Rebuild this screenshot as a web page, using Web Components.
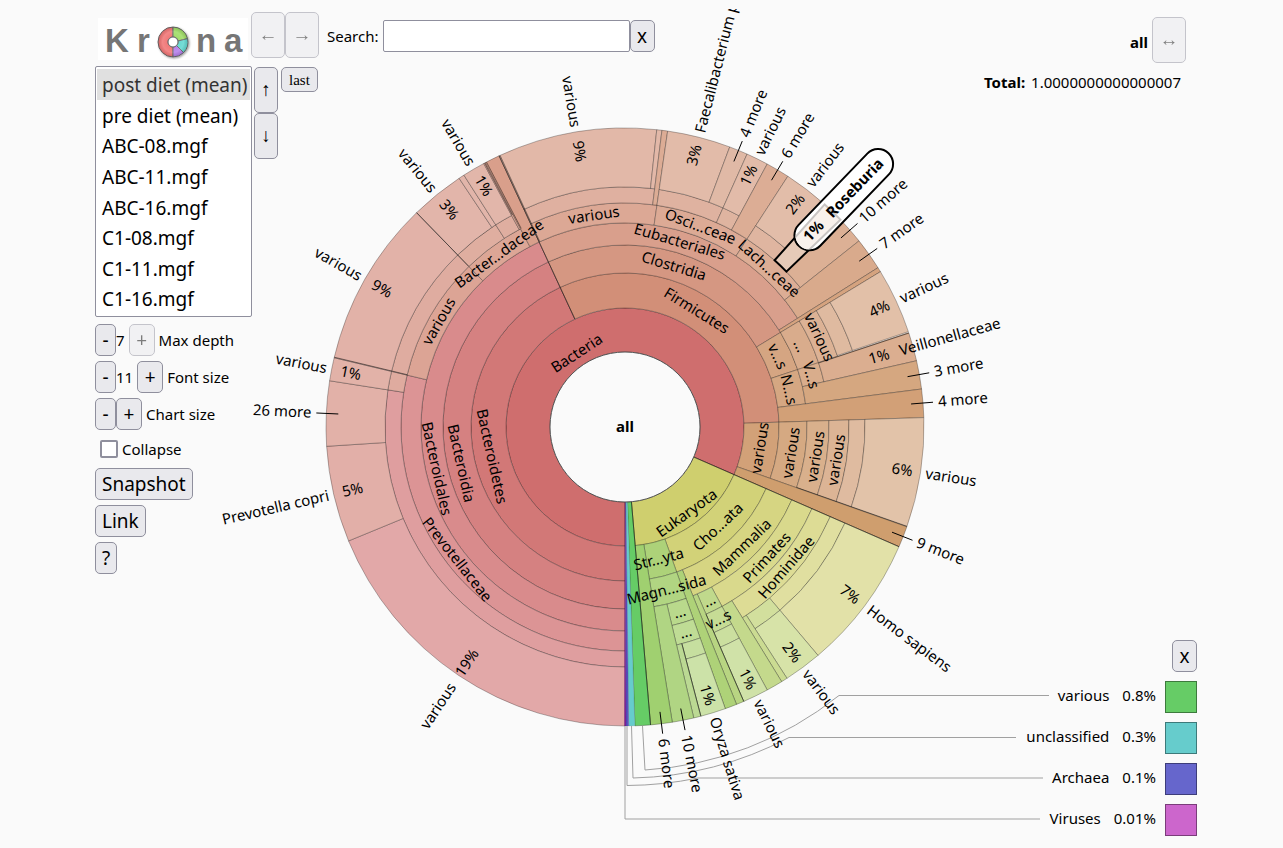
<!DOCTYPE html>
<html lang="en">
<head>
<meta charset="utf-8">
<title>Krona - all</title>
<style>
  body {
    margin: 0;
    background: #fafafa;
    color: #000;
    font: 15px/20px "Noto Sans", sans-serif;
  }
</style>
</head>
<body>
<krona-app></krona-app>

<script>
(function () {
  'use strict';

  // Shared look of the push buttons, included by every element that has one.
  var buttonStyle = `
    button {
      box-sizing: border-box;
      height: 32px;
      margin: 0;
      padding: 0 6px;
      border: 1px solid #8f8f9d;
      border-radius: 5px;
      background: #e9e9ed;
      color: #000;
      font: 19px/24px "Noto Sans", sans-serif;
    }
    button:disabled { opacity: 0.5; }
    button.arrow {
      width: 34px;
      height: 46px;
      padding: 0;
      font: 19px/24px "Liberation Serif", serif;
    }
  `;

  function define(name, template, setup) {
    customElements.define(name, class extends HTMLElement {
      constructor() {
        super();
        var $template = document.createElement('template');
        $template.innerHTML = template;
        this.attachShadow({ mode: 'open' }).appendChild($template.content.cloneNode(true));
      }
      connectedCallback() {
        if (setup && !this.ready) {
          this.ready = true;
          setup.call(this, this.shadowRoot);
        }
      }
    });
  }

  // compass angle (0 = up, clockwise) and radius to a point
  var CX = 625;
  var CY = 427;
  function point(angle, r) {
    var a = angle * Math.PI / 180;
    return (CX + r * Math.sin(a)).toFixed(2) + ' ' + (CY - r * Math.cos(a)).toFixed(2);
  }

  // ring n lies between RINGS[n] and RINGS[n + 1]
  var RINGS = [75, 119, 154, 182, 204, 224, 240, 299];

  // [start, end, first ring, last ring, color, label in the ring]
  var SLICES = [
    [180, 473.6, 0, 0, '#cf6e6e', 'Bacteria'],
    [180, 335.1, 1, 1, '#d27877', 'Bacteroidetes'],
    [180, 335.1, 2, 2, '#d58181', 'Bacteroidia'],
    [180, 335.1, 3, 3, '#d98b8c', 'Bacteroidales'],
    [180, 283.4, 4, 4, '#dc9495', 'Prevotellaceae'],
    [180, 278.9, 5, 5, '#df9e9f'],
    [180, 247.6, 6, 6, '#e2a8a8'],
    [247.6, 266.3, 6, 6, '#e2afa8'],
    [266.3, 278.9, 6, 6, '#e2b1a8'],
    [278.9, 283.4, 5, 5, '#dfab9f'],
    [278.9, 283.4, 6, 6, '#e2b2a8'],
    [283.4, 315.8, 4, 4, '#dca495', 'various'],
    [283.4, 315.8, 5, 5, '#dfaca0'],
    [283.4, 315.8, 6, 6, '#e2b2a8'],
    [315.8, 332.2, 4, 4, '#dca696', 'Bacter...daceae'],
    [315.8, 327.4, 5, 5, '#dfaea0'],
    [315.8, 326.3, 6, 6, '#e2b5aa'],
    [326.3, 327.4, 6, 6, '#e2b5aa'],
    [327.4, 331.8, 5, 5, '#dfaea0'],
    [327.4, 331.8, 6, 6, '#e2b6aa'],
    [331.8, 332.2, 5, 6, '#dca696'],
    [332.2, 335.1, 4, 6, '#d99f8b'],

    [335.1, 448.2, 1, 1, '#d28f78', 'Firmicutes'],
    [335.1, 418.7, 2, 2, '#d59782', 'Clostridia'],
    [335.1, 417.8, 3, 3, '#d99f8c', 'Eubacteriales'],
    [335.1, 368.2, 4, 4, '#dca895', 'various'],
    [335.1, 367.1, 5, 5, '#dfb0a0'],
    [335.1, 366.1, 6, 6, '#e2b8a8'],
    [366.1, 367.1, 6, 6, '#e2b8a8'],
    [367.1, 368.2, 5, 6, '#dcac95'],
    [368.2, 393, 4, 4, '#dcaa95', 'Osci...ceae'],
    [368.2, 384.1, 5, 5, '#dfb2a0'],
    [368.2, 380.5, 6, 6, '#e2bba9'],
    [380.5, 384.1, 6, 6, '#e0b9a6'],
    [384.1, 388.4, 5, 5, '#dfb4a0'],
    [384.1, 388.4, 6, 6, '#e2bba9'],
    [388.4, 393, 5, 6, '#dcad95'],
    [393, 411.5, 4, 4, '#dcad95', 'Lach...ceae'],
    [393, 401.9, 5, 5, '#dfb5a0'],
    [393, 401.9, 6, 6, '#e2bda9'],
    [406.1, 411.5, 5, 6, '#dcb095'],
    [411.5, 417.8, 4, 6, '#d9aa8c'],
    [417.8, 418.7, 3, 6, '#d5a37f'],
    [418.7, 431.6, 2, 2, '#d5a582', 'v...s'],
    [418.7, 431.6, 3, 3, '#d9ac8c', '...'],
    [418.7, 431.6, 4, 4, '#dcb295', 'various'],
    [418.7, 431.4, 5, 5, '#dfbaa0'],
    [418.7, 431.4, 6, 6, '#e2c0a8'],
    [431.6, 442.7, 2, 2, '#d5a782', 'N...s'],
    [431.6, 437.2, 3, 3, '#d9ad8c', 'V...s'],
    [431.6, 437.2, 4, 6, '#dbae90'],
    [437.2, 442.7, 3, 6, '#d5a780'],
    [442.7, 448.2, 2, 6, '#d2a077'],
    [448.2, 469.5, 1, 1, '#d2a178', 'various'],
    [448.2, 469.5, 2, 2, '#d5a982', 'various'],
    [448.2, 469.5, 3, 3, '#d9b08c', 'various'],
    [448.2, 469.5, 4, 4, '#dcb495', 'various'],
    [448.2, 469.5, 5, 5, '#dfbba0'],
    [448.2, 469.5, 6, 6, '#e2c3a9'],
    [469.5, 473.6, 1, 6, '#cf9e6e'],

    [113.6, 175.1, 0, 0, '#cfcf6e', 'Eukaryota'],
    [113.6, 160.4, 1, 1, '#d2d278', 'Cho...ata'],
    [113.6, 158.1, 2, 2, '#d6d582', 'Mammalia'],
    [113.6, 151.6, 3, 3, '#d9d98c', 'Primates'],
    [113.6, 148.4, 4, 4, '#dddc95', 'Hominidae'],
    [113.6, 139.8, 5, 5, '#e0dfa0'],
    [113.6, 139.8, 6, 6, '#e2e1a8'],
    [139.8, 147.2, 5, 5, '#d2df9d'],
    [139.8, 147.2, 6, 6, '#d7e3a8'],
    [147.2, 148.4, 5, 6, '#cbdb92'],
    [148.4, 151.6, 4, 6, '#c4d98c'],
    [151.6, 156.6, 3, 3, '#c0d98c', '...'],
    [151.6, 156.6, 4, 4, '#c6dc95', 'v...s'],
    [151.6, 156.6, 5, 5, '#cbdf9f'],
    [151.6, 156.6, 6, 6, '#d0e2a8'],
    [156.6, 158.1, 3, 6, '#b8d582'],
    [158.1, 160.4, 2, 6, '#aed278'],
    [160.4, 170.9, 1, 1, '#add279', 'Str...yta'],
    [160.4, 170.9, 2, 2, '#b1d582', 'Magn...sida'],
    [160.4, 166.7, 3, 3, '#b9d98c', '...'],
    [160.4, 166.7, 4, 4, '#bfdc95', '...'],
    [160.4, 165.3, 5, 5, '#c6df9f'],
    [160.4, 165.3, 6, 6, '#cce2a8'],
    [165.3, 166.7, 5, 6, '#bbd993'],
    [166.7, 170.9, 3, 6, '#b0d583'],
    [170.9, 175.1, 1, 6, '#a0d070'],

    [175.1, 178.1, 0, 6, '#66cc66'],
    [178.1, 179.3, 0, 6, '#66cccc'],
    [179.3, 179.8, 0, 6, '#5a50c0'],
    [179.8, 180.1, 0, 6, '#8020a0']
  ];

  // Bundles of slices too thin to fill: [angle, inner radius, outer radius]
  var EDGES = [
    [335.1, 119, 299], [335.3, 204, 299], [315.8, 224, 299],
    [283.5, 224, 299], [332, 240, 299], [332.4, 224, 299],
    [71.7, 204, 299], [109.4, 182, 299], [113.6, 75, 299],
    [156.6, 204, 299], [165.3, 224, 299],
    [175.1, 75, 299]
  ];

  // Labels outside the rim: [angle, name, percentage, radius of the name]
  var LABELS = [
    [350.6, 'various', '9%', 304],
    [14.3, 'Faecalibacterium prausnitzii', '3%', 304],
    [26.2, 'various', '1%', 304],
    [37.4, 'various', '2%', 304],
    [65.1, 'various', '4%', 304],
    [98.8, 'various', '6%', 304],
    [126.7, 'Homo sapiens', '7%', 304],
    [143.5, 'various', '2%', 304],
    [154.1, 'various', '1%', 304],
    [162.9, 'Oryza sativa', '1%', 304],
    [213.8, 'various', '19%', 310],
    [257, 'Prevotella copri', '5%', 304],
    [281.1, 'various', '1%', 304],
    [299.6, 'various', '9%', 304],
    [321, 'various', '3%', 304],
    [329.6, 'various', '1%', 304]
  ];

  // Groups of hidden slices: [angle, text]
  var MORE = [
    [22.3, '4 more'], [30.7, '6 more'], [48.8, '10 more'], [54.7, '7 more'],
    [79.9, '3 more'], [85.4, '4 more'], [111.5, '9 more'], [168.8, '10 more'],
    [173, '6 more'], [272.6, '26 more']
  ];

  function wedge(start, end, inner, outer) {
    var large = end - start > 180 ? 1 : 0;
    return 'M' + point(start, inner) +
      'A' + inner + ' ' + inner + ' 0 ' + large + ' 1 ' + point(end, inner) +
      'L' + point(end, outer) +
      'A' + outer + ' ' + outer + ' 0 ' + large + ' 0 ' + point(start, outer) + 'Z';
  }

  function ray(angle, from, to) {
    return 'M' + point(angle, from) + 'L' + point(angle, to);
  }

  function radialText(angle, r, text, weight) {
    var left = angle > 180;
    return '<text transform="translate(' + point(angle, r) + ') rotate(' +
      (left ? angle + 90 : angle - 90) + ')" y="5" text-anchor="' +
      (left ? 'end' : 'start') + '"' + (weight ? ' font-weight="' + weight + '"' : '') +
      '>' + text + '</text>';
  }

  // Label across the middle of a slice, turned over in the lower half.
  function ringText(slice) {
    var mid = ((slice[0] + slice[1]) / 2) % 360;
    var under = mid > 90 && mid < 270;
    var r = (RINGS[slice[2]] + RINGS[slice[2] + 1]) / 2;
    return '<text transform="translate(' + point(mid, r) + ') rotate(' +
      (under ? mid + 180 : mid) + ')" y="' + (slice[2] ? 5 : 14) +
      '" text-anchor="middle">' + slice[5] + '</text>';
  }

  function drawChart() {
    var fills = SLICES.map(function (s) {
      return '<path fill="' + s[4] + '" stroke-opacity="' +
        (s[0] > 178 && s[1] < 181 ? 0.1 : 0.28) + '" d="' +
        wedge(s[0], s[1], RINGS[s[2]], RINGS[s[3] + 1]) + '"/>';
    }).join('');
    var edges = EDGES.map(function (e) {
      return '<path d="' + ray(e[0], e[1], e[2]) + '"/>';
    }).join('');
    var rings = SLICES.map(function (s) {
      return s[5] ? ringText(s) : '';
    }).join('');
    var labels = LABELS.map(function (l) {
      return radialText(l[0], l[3], l[1]) + radialText(l[0], l[0] > 180 ? 269 : 270, l[2]);
    }).join('');
    var more = MORE.map(function (m) {
      return '<path stroke="#000" d="' + ray(m[0], 287, 309) + '"/>' +
        radialText(m[0], 314, m[1]);
    }).join('');

    return '<g stroke="#000">' + fills + '</g>' +
      '<g stroke="#000" stroke-opacity="0.45">' + edges + '</g>' +
      '<circle cx="625" cy="427" r="75" fill="#fafafa" stroke="#555"/>' +
      // leader lines to the legend
      '<g fill="none" stroke="#a0a0a0">' +
      '<path d="M642.5 726L645 770A344 344 0 0 0 839 695.500H1049"/>' +
      '<path d="M631.500 726L633 778A351 351 0 0 0 789 737.500H1016"/>' +
      '<path d="M627 726V785.500A359 359 0 0 0 698 778H1043"/>' +
      '<path d="M625 726V819H1040"/></g>' +
      '<g clip-path="url(#stage)">' + rings + labels + more +
      radialText(74.5, 285, 'Veillonellaceae') + radialText(74.5, 253, '1%') + '</g>' +
      // highlighted slice with its name in a capsule
      '<path fill="#e6cab8" stroke="#000" stroke-width="2" d="' + wedge(41.9, 46.1, 224, 299) + '"/>' +
      '<path stroke="#000" stroke-width="32" stroke-linecap="round" d="' + ray(43.9, 266, 365) + '"/>' +
      '<path stroke="#fff" stroke-width="28" stroke-linecap="round" d="' + ray(43.9, 266, 365) + '"/>' +
      '<path fill="#f8f1ec" stroke="#c8c4c2" stroke-width="2" d="' + wedge(41.9, 46.1, 248, 299) + '" clip-path="url(#capsule)"/>' +
      radialText(43.9, 294, 'Roseburia', 'bold') + radialText(43.9, 261, '1%', 'bold') +
      '<text x="625" y="432" text-anchor="middle" font-weight="bold">all</text>';
  }

  define('krona-chart', `
    <style>
      :host { display: block; }
      svg {
        display: block;
        width: 100%;
        height: 100vh;
        font: 15px "Noto Sans", sans-serif;
      }
    </style>
    <svg viewBox="0 0 1283 848" role="img" aria-label="Taxonomy chart">
      <defs>
        <clipPath id="stage"><rect y="9" width="1283" height="839"/></clipPath>
        <clipPath id="capsule">
          <rect x="252" y="-14" width="128" height="28" rx="14"
            transform="translate(625 427) rotate(-46.1)"/>
        </clipPath>
      </defs>
      <g id="chart"></g>
    </svg>
  `, function (root) {
    root.getElementById('chart').innerHTML = drawChart();
  });

  define('krona-logo', `
    <style>
      :host { display: block; width: 150px; height: 42px; background: #fff; }
      svg { display: block; width: 100%; height: 100%; font: bold 33px "Liberation Sans", sans-serif; }
    </style>
    <svg viewBox="98 18 150 42" role="img" aria-label="Krona">
      <defs>
        <radialGradient id="shade">
          <stop offset="0.2" stop-color="#fff" stop-opacity="0"/>
          <stop offset="0.7" stop-color="#fff" stop-opacity="0.15"/>
          <stop offset="1" stop-color="#000" stop-opacity="0.1"/>
        </radialGradient>
        <filter id="drop" x="-20%" y="-20%" width="150%" height="150%">
          <feDropShadow dx="1" dy="1" stdDeviation="1" flood-opacity="0.4"/>
        </filter>
      </defs>
      <g fill="#767676">
        <text x="105" y="52">K</text>
        <text x="137" y="52">r</text>
        <text x="196" y="52">n</text>
        <text x="224" y="52">a</text>
      </g>
      <g stroke="#666" filter="url(#drop)">
        <path fill="#f07272" d="M173 57A15 15 0 0 1 173 27V37A5 5 0 0 0 173 47Z"/>
        <path fill="#9cdb62" d="M173 27A15 15 0 0 1 187.600 38.600L178 41A5 5 0 0 0 173 37Z"/>
        <path fill="#5fd6cf" d="M187.600 38.600A15 15 0 0 1 183.600 52.600L176.500 45.500A5 5 0 0 0 178 41Z"/>
        <path fill="#b27bea" d="M183.600 52.600A15 15 0 0 1 173 57V47A5 5 0 0 0 176.500 45.500Z"/>
        <circle cx="173" cy="42" r="5" fill="#fff"/>
      </g>
      <path fill="url(#shade)" fill-rule="evenodd" d="M158 42a15 15 0 1 0 30 0a15 15 0 1 0 -30 0M168 42a5 5 0 1 0 10 0a5 5 0 1 0 -10 0"/>
    </svg>
  `);

  define('krona-search', `
    <style>
      ${buttonStyle}
      :host { display: flex; align-items: center; }
      label { margin-right: 4px; }
      input {
        box-sizing: border-box;
        width: 247px;
        height: 32px;
        padding: 0 4px;
        border: 1px solid #8f8f9d;
        border-radius: 2px;
        background: #fff;
        font: inherit;
      }
      button { width: 25px; padding: 0; }
    </style>
    <label for="term">Search:</label>
    <input id="term" type="text">
    <button type="button">x</button>
  `);

  define('krona-datasets', `
    <style>
      ${buttonStyle}
      :host { display: flex; align-items: flex-start; gap: 2px; }
      select {
        box-sizing: border-box;
        width: 157px;
        height: 251px;
        padding: 2px 1px;
        border: 1px solid #8f8f9d;
        border-radius: 2px;
        background: #fff;
        color: #000;
        font: 19px/24px "Noto Sans", sans-serif;
        overflow: hidden;
      }
      option {
        box-sizing: border-box;
        height: 12.5%;
        min-height: 30px;
        padding: 3px 0 0 5px;
        line-height: 24px;
      }
      option:checked {
        background: linear-gradient(#e0e0e0, #e0e0e0);
        color: #333;
      }
      .step { display: flex; flex-direction: column; margin-top: 1px; }
      .step button { width: 24px; }
      .last {
        height: 25px;
        margin: 1px 0 0 1px;
        padding: 0 7px;
        font: 15px/20px "Liberation Serif", serif;
      }
    </style>
    <select size="8" aria-label="Dataset">
      <option selected>post diet (mean)</option>
      <option>pre diet (mean)</option>
      <option>ABC-08.mgf</option>
      <option>ABC-11.mgf</option>
      <option>ABC-16.mgf</option>
      <option>C1-08.mgf</option>
      <option>C1-11.mgf</option>
      <option>C1-16.mgf</option>
    </select>
    <div class="step">
      <button type="button" class="arrow">↑</button>
      <button type="button" class="arrow">↓</button>
    </div>
    <button type="button" class="last">last</button>
  `);

  // <krona-stepper value="7" at-max>Max depth</krona-stepper>
  define('krona-stepper', `
    <style>
      ${buttonStyle}
      :host { display: flex; align-items: center; line-height: 24px; }
      button { padding: 0; }
      .less { width: 21px; }
      .more { width: 26px; margin-right: 4px; }
      output:not(:empty) { margin-right: 4px; }
    </style>
    <button type="button" class="less">-</button>
    <output></output>
    <button type="button" class="more">+</button>
    <slot></slot>
  `, function (root) {
    root.querySelector('output').textContent = this.getAttribute('value') || '';
    root.querySelector('.more').disabled = this.hasAttribute('at-max');
  });

  define('krona-legend-item', `
    <style>
      :host { display: flex; justify-content: flex-end; gap: 9px; line-height: 28px; }
      .name { margin-right: 4px; }
      .swatch {
        box-sizing: border-box;
        width: 32px;
        height: 32px;
        border: 1px solid rgba(0, 0, 0, 0.4);
      }
    </style>
    <span class="name"><slot></slot></span>
    <span class="share"></span>
    <span class="swatch"></span>
  `, function (root) {
    root.querySelector('.share').textContent = this.getAttribute('share');
    root.querySelector('.swatch').style.background = this.getAttribute('color');
  });

  define('krona-legend', `
    <style>
      ${buttonStyle}
      :host { display: flex; flex-direction: column; align-items: flex-end; gap: 9px; }
      button { width: 25px; padding: 0; }
    </style>
    <button type="button">x</button>
    <slot></slot>
  `);

  define('krona-details', `
    <style>
      ${buttonStyle}
      :host { display: flex; flex-direction: column; align-items: flex-end; gap: 9px; }
      .node { display: flex; align-items: center; gap: 4px; }
      .node b { padding-top: 4px; }
      .total { display: flex; gap: 6px; margin-right: 5px; }
    </style>
    <div class="node"><b>all</b><button type="button" class="arrow" disabled>↔</button></div>
    <div class="total"><b>Total:</b><span>1.0000000000000007</span></div>
  `);

  define('krona-app', `
    <style>
      ${buttonStyle}
      :host { display: grid; min-height: 100vh; }
      krona-chart, .panels { grid-area: 1 / 1; min-width: 0; }
      .panels {
        z-index: 1;
        box-sizing: border-box;
        display: grid;
        grid-template: auto 1fr / 1fr auto;
        padding: 12px 86px 12px 95px;
      }
      .toolbar { display: flex; align-items: flex-start; }
      .left { grid-row: 1 / 3; display: flex; flex-direction: column; align-items: flex-start; gap: 6px; }
      krona-logo { margin: 6px 3px 0; }
      krona-search { margin: 8px 0 0 8px; }
      .options { display: flex; flex-direction: column; align-items: flex-start; gap: 5px; margin-top: 1px; }
      .collapse { display: flex; align-items: center; height: 28px; gap: 4px; margin-left: 5px; }
      .collapse input {
        appearance: none;
        box-sizing: border-box;
        width: 18px;
        height: 18px;
        margin: 0;
        border: 2px solid #8f8f9d;
        border-radius: 2px;
        background: #fff;
      }
      krona-details { margin: 5px 11px 0 0; }
      krona-legend { align-self: end; }
    </style>
    <krona-chart></krona-chart>
    <div class="panels">
      <div class="left">
        <div class="toolbar">
          <krona-logo></krona-logo>
          <button type="button" class="arrow" disabled>←</button>
          <button type="button" class="arrow" disabled>→</button>
          <krona-search></krona-search>
        </div>
        <krona-datasets></krona-datasets>
        <div class="options">
          <krona-stepper value="7" at-max>Max depth</krona-stepper>
          <krona-stepper value="11">Font size</krona-stepper>
          <krona-stepper>Chart size</krona-stepper>
          <div class="collapse">
            <input type="checkbox" id="collapse">
            <label for="collapse">Collapse</label>
          </div>
          <button type="button">Snapshot</button>
          <button type="button">Link</button>
          <button type="button">?</button>
        </div>
      </div>
      <krona-details></krona-details>
      <krona-legend>
        <krona-legend-item share="0.8%" color="#66cc66">various</krona-legend-item>
        <krona-legend-item share="0.3%" color="#66cccc">unclassified</krona-legend-item>
        <krona-legend-item share="0.1%" color="#6666cc">Archaea</krona-legend-item>
        <krona-legend-item share="0.01%" color="#cc66cc">Viruses</krona-legend-item>
      </krona-legend>
    </div>
  `);
}());
</script>
</body>
</html>
